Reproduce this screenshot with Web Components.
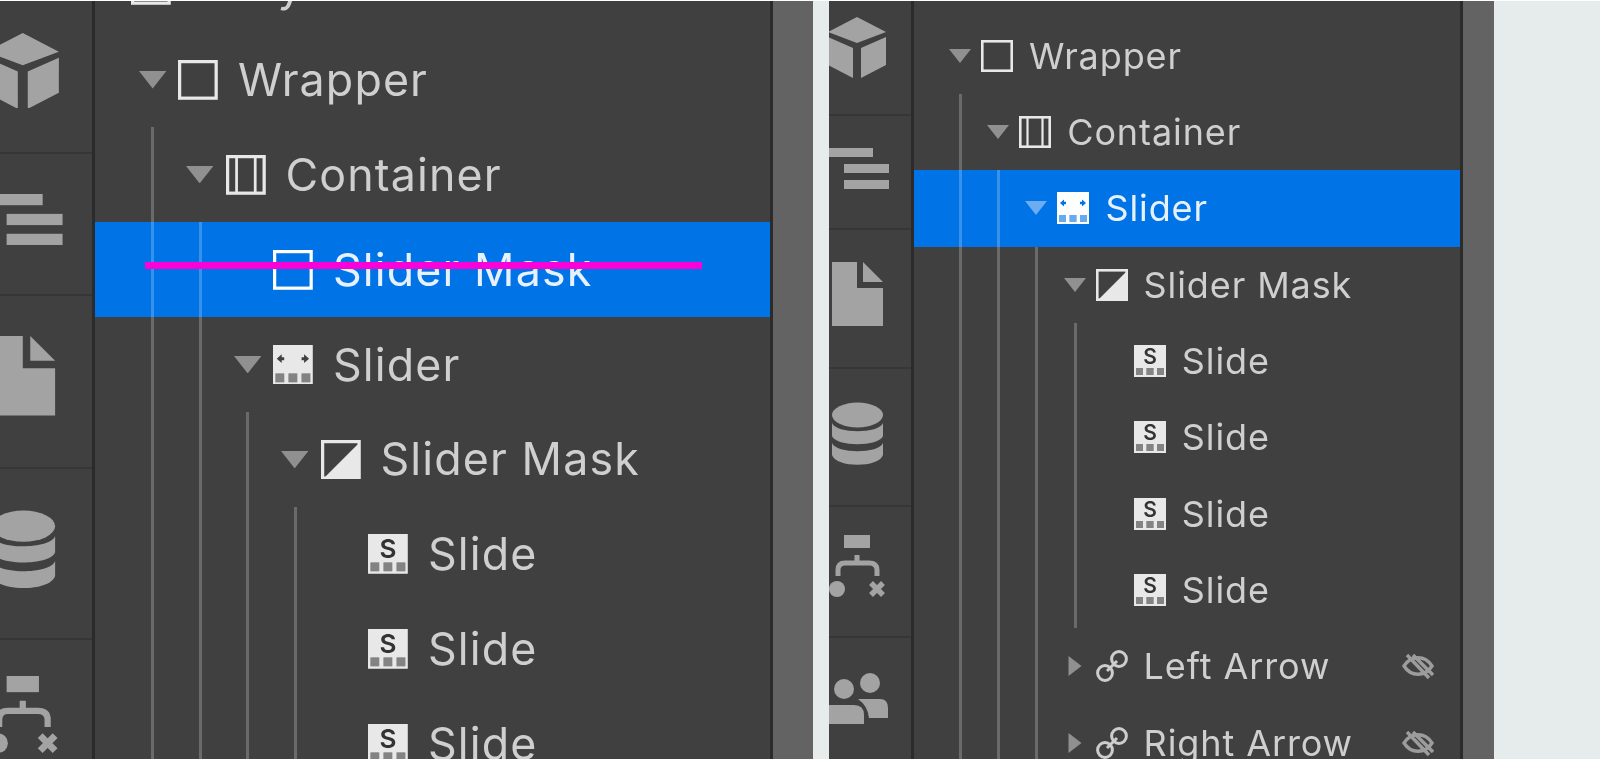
<!DOCTYPE html>
<html lang="en">
<head>
<meta charset="utf-8">
<title>Navigator</title>
<style>
  html, body { margin: 0; height: 100%; background: #fff; overflow: hidden; }
  body { padding-top: 1px; box-sizing: border-box; font-family: Inter, "Liberation Sans", sans-serif; }
</style>
</head>
<body>
<nav-stage>
  <tree-panel style="--u:1.2435;--side:92px;--icon-shift:-17px;--cube-h:153.3px;--cube-pad:12.3px;--tree-top:-63.4px;--gutter:40px;width:813px">
    <tree-row level="-1" icon="square" label="Body" caret="none"></tree-row>
    <tree-row level="0" icon="square" label="Wrapper"></tree-row>
    <tree-row level="1" icon="container" label="Container" guides="0"></tree-row>
    <tree-row level="2" icon="square" label="Slider Mask" guides="0,1" caret="none" selected></tree-row>
    <tree-row level="2" icon="slider" label="Slider" guides="0,1"></tree-row>
    <tree-row level="3" icon="mask" label="Slider Mask" guides="0,1,2"></tree-row>
    <tree-row level="4" icon="slide" label="Slide" guides="0,1,2,3" caret="none"></tree-row>
    <tree-row level="4" icon="slide" label="Slide" guides="0,1,2,3" caret="none"></tree-row>
    <tree-row level="4" icon="slide" label="Slide" guides="0,1,2,3" caret="none"></tree-row>
    <drop-line></drop-line>
  </tree-panel>
  <tree-panel style="--u:1;--side:82px;--icon-shift:-4.5px;--cube-h:115px;--cube-pad:20px;--tree-top:16.7px;--gutter:31px;width:665px">
    <tree-row level="0" icon="square" label="Wrapper"></tree-row>
    <tree-row level="1" icon="container" label="Container" guides="0"></tree-row>
    <tree-row level="2" icon="slider" label="Slider" guides="0,1" selected></tree-row>
    <tree-row level="3" icon="mask" label="Slider Mask" guides="0,1,2"></tree-row>
    <tree-row level="4" icon="slide" label="Slide" guides="0,1,2,3" caret="none"></tree-row>
    <tree-row level="4" icon="slide" label="Slide" guides="0,1,2,3" caret="none"></tree-row>
    <tree-row level="4" icon="slide" label="Slide" guides="0,1,2,3" caret="none"></tree-row>
    <tree-row level="4" icon="slide" label="Slide" guides="0,1,2,3" caret="none"></tree-row>
    <tree-row level="3" icon="link" label="Left Arrow" guides="0,1,2" caret="right" hidden-eye></tree-row>
    <tree-row level="3" icon="link" label="Right Arrow" guides="0,1,2" caret="right" hidden-eye></tree-row>
  </tree-panel>
</nav-stage>

<script>
const treeIcons = {
    square: `<rect x="1.3" y="1.3" width="29.4" height="29.4" fill="none" stroke="currentColor" stroke-width="2.6"/>`,
    container: `<rect x="1.3" y="1.3" width="29.4" height="29.4" fill="none" stroke="currentColor" stroke-width="2.6"/>
        <path d="M8.5 1V31M23.5 1V31" stroke="currentColor" stroke-width="2.2"/>`,
    mask: `<rect x="1.3" y="1.3" width="29.4" height="29.4" fill="none" stroke="currentColor" stroke-width="2.6"/>
        <path d="M3 30L30 3V30Z" fill="currentColor"/>`,
    slider: `<path fill-rule="evenodd" fill="currentColor" d="M0 0H32V32H0Z M2 23H9V30H2Z M12.5 23H19.5V30H12.5Z M23 23H30V30H23Z M3 11L7 7.5V9.8H9V12.2H7V14.5Z M29 11L25 7.5V9.8H23V12.2H25V14.5Z"/>
        <path d="M2 23H9V30H2Z M12.5 23H19.5V30H12.5Z M23 23H30V30H23Z" fill="currentColor" opacity=".4"/>`,
    slide: `<path fill-rule="evenodd" fill="currentColor" d="M0 0H32V32H0Z M2 23H9V30H2Z M12.5 23H19.5V30H12.5Z M23 23H30V30H23Z"/>
        <path d="M2 23H9V30H2Z M12.5 23H19.5V30H12.5Z M23 23H30V30H23Z" fill="currentColor" opacity=".4"/>
        <text x="16" y="19" text-anchor="middle" font-size="21" font-weight="600" fill="#333" font-family="Inter, 'Liberation Sans', sans-serif">S</text>`,
    link: `<g fill="none" stroke="#cdcdcd" stroke-width="3">
        <circle cx="9" cy="23" r="7.4"/><circle cx="23" cy="9" r="7.4"/><path d="M11 21L21 11"/></g>`
};

class NavStage extends HTMLElement {
    constructor() {
        super();
        const shadow = this.attachShadow({mode: 'open'});
        shadow.innerHTML = `
            <style>
                :host { display: flex; gap: 16px; height: 758px; background: #e6ebeb; overflow: hidden; }
            </style>
            <slot></slot>
        `;
    }
}

class SideBar extends HTMLElement {
    constructor() {
        super();
        const shadow = this.attachShadow({mode: 'open'});
        shadow.innerHTML = `
            <style>
                :host {
                    display: block;
                    flex: none;
                    width: var(--side);
                    height: 100%;
                    overflow: hidden;
                    border-right: 3px solid #2b2b2b;
                }
                .cell {
                    display: flex;
                    align-items: center;
                    box-sizing: border-box;
                    height: calc(var(--u) * var(--h));
                    padding-bottom: calc(var(--u) * var(--p));
                    border-bottom: 2px solid #363636;
                }
                .cell.first { height: var(--cube-h); padding-bottom: var(--cube-pad); }
                svg {
                    flex: none;
                    margin-left: var(--icon-shift);
                    width: calc(var(--u) * 66px);
                    fill: #a3a3a3;
                    filter: blur(.4px);
                }
            </style>
            <div class="cell first">
                <svg viewBox="825 17 66 61" style="height:calc(var(--u) * 61px)">
                    <path d="M857 17L886 32L857 43L828 32Z"/>
                    <path d="M861 48L886 37V65L861 78Z"/>
                    <path d="M853 48L828 37V65L853 78Z"/>
                </svg>
            </div>
            <div class="cell" style="--h:114px;--p:7px">
                <svg viewBox="825 148 66 41" style="height:calc(var(--u) * 41px)">
                    <rect x="820" y="148" width="53" height="9"/>
                    <rect x="844" y="164" width="45" height="9"/>
                    <rect x="844" y="180" width="45" height="9"/>
                </svg>
            </div>
            <div class="cell" style="--h:139px;--p:9px">
                <svg viewBox="825 262 66 64" style="height:calc(var(--u) * 64px)">
                    <path d="M832 262H857V288H883V326H832Z"/>
                    <path d="M863 262L883 282H863Z"/>
                </svg>
            </div>
            <div class="cell" style="--h:138px;--p:7px">
                <svg viewBox="825 402 66 64" style="height:calc(var(--u) * 64px)">
                    <ellipse cx="857.5" cy="415" rx="25.5" ry="12.5"/>
                    <path d="M832 423C836 434 879 434 883 423V436C879 447 836 447 832 436Z"/>
                    <path d="M832 443C836 454 879 454 883 443V455C879 468 836 468 832 455Z"/>
                </svg>
            </div>
            <div class="cell" style="--h:131px;--p:9px">
                <svg viewBox="825 536 66 64" style="height:calc(var(--u) * 64px)">
                    <rect x="844" y="536" width="26" height="13"/>
                    <path d="M857 556V564M838 577V571Q838 564 845 564H869Q877 564 877 571V577" fill="none" stroke="#a3a3a3" stroke-width="5"/>
                    <circle cx="837" cy="590" r="8"/>
                    <path d="M871 584L883 596M883 584L871 596" stroke="#a3a3a3" stroke-width="5.5"/>
                </svg>
            </div>
            <div class="cell" style="--h:131px;--p:11px;border:0">
                <svg viewBox="825 673 66 51" style="height:calc(var(--u) * 51px)">
                    <circle cx="844" cy="689" r="10"/>
                    <circle cx="870" cy="683" r="10"/>
                    <path d="M820 724V713Q820 705 830 705H854Q864 705 864 715V724Z"/>
                    <path d="M858 699H880Q888 699 888 708V718H869Q868 706 858 699Z"/>
                </svg>
            </div>
        `;
    }
}

class TreePanel extends HTMLElement {
    constructor() {
        super();
        const shadow = this.attachShadow({mode: 'open'});
        shadow.innerHTML = `
            <style>
                :host {
                    display: flex;
                    flex: none;
                    position: relative;
                    height: 100%;
                    background: #404040;
                    overflow: hidden;
                }
                .tree { flex: 1; min-width: 0; margin-top: var(--tree-top); }
                .gutter {
                    flex: none;
                    width: var(--gutter);
                    background: #636363;
                    border-left: 3px solid #2b2b2b;
                }
            </style>
            <side-bar></side-bar>
            <div class="tree"><slot></slot></div>
            <div class="gutter"></div>
        `;
    }
}

class TreeRow extends HTMLElement {
    constructor() {
        super();
        this.attachShadow({mode: 'open'});
    }

    connectedCallback() {
        const level = parseInt(this.getAttribute('level')) || 0;
        const guides = this.getAttribute('guides') ? this.getAttribute('guides').split(',').map(Number) : [];
        const caret = this.getAttribute('caret') || 'down';
        const icon = this.getAttribute('icon') || 'square';
        const carets = {
            down: '<svg class="caret" viewBox="0 0 22 14"><path d="M0 0H22L11 14Z"/></svg>',
            right: '<svg class="caret" viewBox="0 0 22 20"><path d="M4.5 0L17.5 10L4.5 20Z"/></svg>',
            none: '<span class="caret"></span>'
        };
        const eye = this.hasAttribute('hidden-eye') ? `
            <svg class="eye" viewBox="0 0 32 28" fill="none" stroke="currentColor" stroke-width="3.4">
                <path d="M2 14C9 3 23 3 30 14C23 25 9 25 2 14Z"/>
                <path d="M5 3L27 26M11 3L31 23"/>
            </svg>` : '';
        this.shadowRoot.innerHTML = `
            <style>
                :host {
                    display: block;
                    position: relative;
                    height: calc(var(--u) * 76.3px);
                    color: #e8e8e8;
                }
                :host([selected]) { background: #0073e6; color: #fff; }
                .guide {
                    position: absolute;
                    top: 0;
                    bottom: 0;
                    width: 3px;
                    margin-left: -1px;
                    background: rgba(255, 255, 255, .22);
                }
                .row {
                    display: flex;
                    align-items: center;
                    height: 100%;
                    margin-left: calc(var(--u) * (35px + 38.2px * ${level}));
                    margin-right: calc(var(--u) * 26px);
                }
                .caret {
                    flex: none;
                    width: calc(var(--u) * 22px);
                    margin-right: calc(var(--u) * 10px);
                    fill: rgba(255, 255, 255, .42);
                    filter: blur(.6px);
                }
                .icon {
                    flex: none;
                    width: calc(var(--u) * 32px);
                    height: calc(var(--u) * 32px);
                    filter: blur(.3px);
                }
                .label {
                    margin-left: calc(var(--u) * 16px);
                    font-size: calc(var(--u) * 36px);
                    letter-spacing: .025em;
                    white-space: nowrap;
                    color: #cfcfcf;
                    filter: blur(.6px);
                }
                :host([selected]) .label { color: #e6f1fc; }
                .eye {
                    flex: none;
                    margin-left: auto;
                    width: calc(var(--u) * 32px);
                    height: calc(var(--u) * 28px);
                    color: #9c9c9c;
                    filter: blur(.7px);
                }
            </style>
            ${guides.map(g => `<i class="guide" style="left:calc(var(--u) * (46px + 38.2px * ${g}))"></i>`).join('')}
            <div class="row">
                ${carets[caret]}
                <svg class="icon" viewBox="0 0 32 32">${treeIcons[icon]}</svg>
                <span class="label">${this.getAttribute('label')}</span>
                ${eye}
            </div>
        `;
    }
}

class DropLine extends HTMLElement {
    constructor() {
        super();
        const shadow = this.attachShadow({mode: 'open'});
        shadow.innerHTML = `
            <style>
                :host {
                    position: absolute;
                    left: 145px;
                    top: 261px;
                    width: 557px;
                    height: 7px;
                    background: #fb00d9;
                }
            </style>
        `;
    }
}

customElements.define('nav-stage', NavStage);
customElements.define('side-bar', SideBar);
customElements.define('tree-panel', TreePanel);
customElements.define('tree-row', TreeRow);
customElements.define('drop-line', DropLine);
</script>
</body>
</html>
